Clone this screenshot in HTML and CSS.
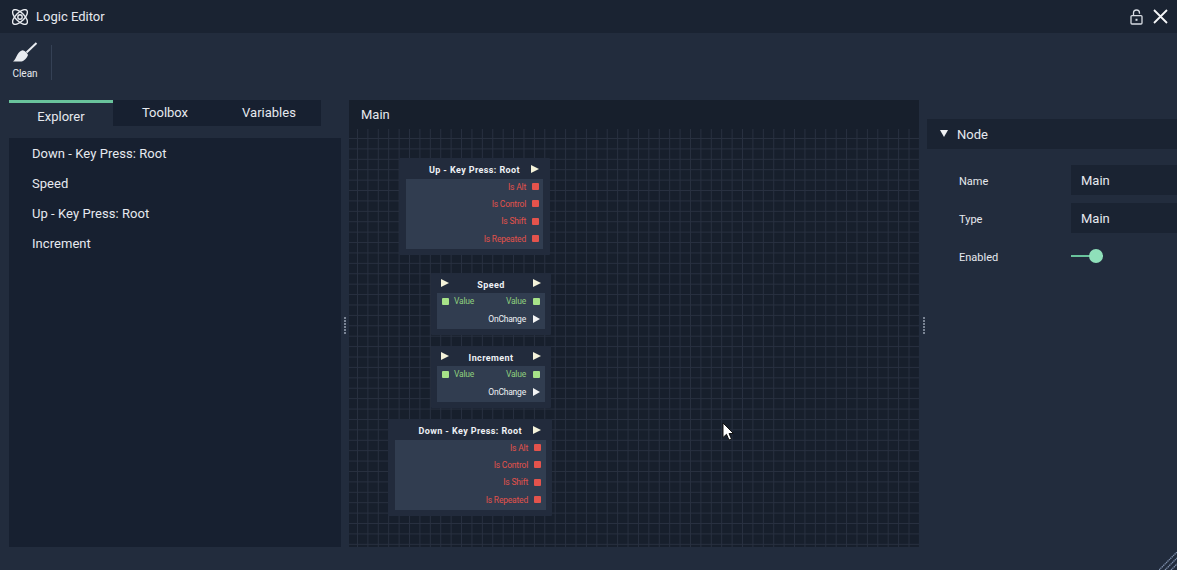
FILE: index.html
```html
<!DOCTYPE html>
<html lang="en">
<head>
<meta charset="utf-8">
<title>Logic Editor</title>
<link rel="stylesheet" href="styles.css">
</head>
<body>
<div class="app">
  <header class="titlebar">
    <svg class="atom" viewBox="0 0 16 16" width="16" height="16"><g fill="none" stroke="#e8ebf0" stroke-width="1.4"><ellipse cx="8" cy="8" rx="9.500" ry="4.300" transform="rotate(45 8 8)"/><ellipse cx="8" cy="8" rx="9.500" ry="4.300" transform="rotate(-45 8 8)"/><circle cx="8" cy="8" r="2.200"/></g></svg>
    <span class="title">Logic Editor</span>
    <span class="spacer"></span>
    <svg class="lock" viewBox="0 0 13 16" width="13" height="16"><g fill="none" stroke="#d8dce3" stroke-width="1.3"><path d="M3.500 6.500V4a3 3 0 0 1 6 0v.7"/><rect x="1" y="6.600" width="11" height="8.400" rx="1"/></g><rect x="5.500" y="9.800" width="2" height="2" fill="#d8dce3"/></svg>
    <svg class="close" viewBox="0 0 15 15" width="15" height="15"><path d="M1 1l13 13M14 1L1 14" stroke="#f4f5f7" stroke-width="1.800" fill="none"/></svg>
  </header>

  <div class="toolbar">
    <button class="tool">
      <svg viewBox="0 0 26 20" width="26" height="20"><path d="M14.500 10.500L24.500 1" stroke="#e8ebf0" stroke-width="2" fill="none"/><path d="M1 19.500C3 18 4 15 5.500 12.500 7 10 9 8.500 10.500 8.300 12.500 8.500 15.500 11 16 13 15 16 12 19 9.500 19.500z" fill="#e8ebf0"/></svg>
      <span>Clean</span>
    </button>
    <span class="sep"></span>
  </div>

  <main class="workspace">
    <section class="left">
      <nav class="tabs">
        <a class="tab active">Explorer</a>
        <a class="tab">Toolbox</a>
        <a class="tab">Variables</a>
      </nav>
      <ul class="list">
        <li>Down - Key Press: Root</li>
        <li>Speed</li>
        <li>Up - Key Press: Root</li>
        <li>Increment</li>
      </ul>
    </section>

    <section class="center">
      <div class="center-head">Main</div>
      <div class="canvas">
        <div class="node key n-up">
          <div class="node-head"><span class="node-title">Up - Key Press: Root</span><i class="play"></i></div>
          <div class="node-body">
            <div class="row red"><span>Is Alt</span><i class="port"></i></div>
            <div class="row red"><span>Is Control</span><i class="port"></i></div>
            <div class="row red"><span>Is Shift</span><i class="port"></i></div>
            <div class="row red"><span>Is Repeated</span><i class="port"></i></div>
          </div>
        </div>

        <div class="node var n-speed">
          <div class="node-head"><i class="play"></i><span class="node-title">Speed</span><i class="play"></i></div>
          <div class="node-body">
            <div class="row green"><i class="port"></i><span>Value</span><span class="grow">Value</span><i class="port"></i></div>
            <div class="row white"><span class="grow">OnChange</span><i class="play"></i></div>
          </div>
        </div>

        <div class="node var n-inc">
          <div class="node-head"><i class="play"></i><span class="node-title">Increment</span><i class="play"></i></div>
          <div class="node-body">
            <div class="row green"><i class="port"></i><span>Value</span><span class="grow">Value</span><i class="port"></i></div>
            <div class="row white"><span class="grow">OnChange</span><i class="play"></i></div>
          </div>
        </div>

        <div class="node key n-down">
          <div class="node-head"><span class="node-title">Down - Key Press: Root</span><i class="play"></i></div>
          <div class="node-body">
            <div class="row red"><span>Is Alt</span><i class="port"></i></div>
            <div class="row red"><span>Is Control</span><i class="port"></i></div>
            <div class="row red"><span>Is Shift</span><i class="port"></i></div>
            <div class="row red"><span>Is Repeated</span><i class="port"></i></div>
          </div>
        </div>

        <svg class="cursor" viewBox="0 0 12 19" width="12" height="19"><path d="M1 1v14.500l3.500-3.200 2.500 5.700 2.500-1-2.500-5.500H11.500z" fill="#fff" stroke="#111" stroke-width="1"/></svg>
      </div>
    </section>

    <section class="right">
      <div class="panel-head"><i class="tri"></i><span>Node</span></div>
      <div class="fields">
        <div class="field"><label>Name</label><div class="input">Main</div></div>
        <div class="field"><label>Type</label><div class="input">Main</div></div>
        <div class="field"><label>Enabled</label><div class="toggle"><i class="knob"></i></div></div>
      </div>
    </section>

    <i class="grip g1"></i>
    <i class="grip g2"></i>
  </main>

  <svg class="corner" viewBox="0 0 18 18" width="18" height="18"><g stroke="#7f90ad" stroke-width="1.300" stroke-dasharray="1.400 .6"><path d="M0 18L18 0M6 18L18 6M12 18L18 12"/></g></svg>
</div>
</body>
</html>
```
FILE: styles.css
```css
* { box-sizing: border-box; }
html, body { margin: 0; height: 100%; }
body {
  font-family: Roboto, "Liberation Sans", sans-serif;
  background: #222c3d;
  color: #e6e9ef;
  overflow: hidden;
}
.app { position: relative; width: 1177px; height: 570px; display: flex; flex-direction: column; }

.titlebar {
  height: 33px;
  flex: none;
  background: #1a2332;
  display: flex;
  align-items: center;
  padding: 0 9px 0 12px;
}
.title { margin-left: 8px; font-size: 13px; }
.spacer { flex: 1; }
.lock { margin-right: 10px; }

.toolbar { height: 67px; flex: none; display: flex; padding: 9px 0 0 12px; }
.tool {
  width: 26px; height: 42px; padding: 0; border: 0; background: none; color: #e6e9ef;
  font: 10px Roboto, sans-serif;
  display: flex; flex-direction: column; align-items: center; gap: 6px;
}
.tool svg { flex: none; }
.sep { width: 1px; height: 35px; margin: 3px 0 0 13px; background: #354155; }

.workspace { position: relative; flex: none; height: 447px; display: flex; padding-left: 9px; gap: 8px; }

.left { width: 332px; flex: none; display: flex; flex-direction: column; }
.tabs { width: 312px; height: 26px; display: flex; background: #172030; }
.tab { flex: 1; text-align: center; font-size: 13px; line-height: 26px; height: 26px; }
.tab.active { background: #222c3d; border-top: 3px solid #69c39c; line-height: 28px; }
.list { flex: 1; margin: 12px 0 0; padding: 1px 0 0 23px; list-style: none; background: #172030; font-size: 13px; letter-spacing: .05px; }
.list li { height: 30px; line-height: 30px; }

.center { width: 570px; flex: none; display: flex; flex-direction: column; background: #171f2c; }
.center-head { height: 29px; flex: none; padding-left: 12px; line-height: 29px; font-size: 13px; }
.canvas {
  position: relative; flex: 1;
  background-color: #171f2c;
  background-image:
    linear-gradient(to right, #283040 1px, transparent 1px),
    linear-gradient(to bottom, #283040 1px, transparent 1px);
  background-size: 10.42px 10.42px;
  background-position: 8px 9px;
}

.node { position: absolute; background: #222b3c; padding: 0 7px 6px; display: flex; flex-direction: column; border-radius: 1px; }
.key { height: 97px; }
.var { height: 62px; width: 120px; padding: 0 6px 6px; }
.n-up { left: 50px; top: 29px; width: 151px; }
.n-speed { left: 82px; top: 144px; }
.n-inc { left: 82px; top: 217px; }
.n-down { left: 39px; top: 290px; width: 164px; padding: 0 6px 6px 7px; }

.node-head { flex: 1; display: flex; align-items: center; justify-content: flex-end; padding: 0 4px; }
.n-down .node-head { padding: 0 5px; }
.node-title {
  font-size: 9px; font-weight: 700; letter-spacing: .4px; color: #eef1f5; padding-top: 3px;
  margin-right: 11px;
}
.var .node-head { justify-content: space-between; }
.var .node-title { margin: 0; flex: 1; text-align: center; }
.node-body { flex: none; background: #313d50; }
.key .node-body { height: 70px; }
.var .node-body { height: 36px; }
.row { height: 17.33px; display: flex; align-items: center; justify-content: flex-end; padding: 0 4px; font-size: 8.5px; letter-spacing: -.2px; gap: 6px; }
.row:first-child { margin-top: -1px; }
.n-down .row { padding: 0 5px; }
.row .grow { flex: 1; text-align: right; margin-right: 2px; }
.var .row { height: 18px; padding: 0 5px; gap: 5px; }
.red { color: #e2524b; }
.green { color: #8fd07e; }
.white { color: #eef1f5; }
.port { width: 7px; height: 7px; flex: none; border-radius: 1px; }
.red .port { background: #e4534c; }
.green .port { background: #a7e388; }
.play {
  flex: none; width: 0; height: 0;
  border-left: 8px solid #f5f3da;
  border-top: 4px solid transparent;
  border-bottom: 4px solid transparent;
}
.white .play { border-left-width: 7px; border-left-color: #f3f4f4; }

.cursor { position: absolute; left: 373px; top: 293px; }

.right { flex: 1; padding-top: 19px; }
.panel-head { height: 30px; background: #1a2332; display: flex; align-items: center; padding-left: 13px; gap: 9px; font-size: 13px; }
.tri {
  width: 0; height: 0;
  border-top: 7px solid #f0f2f5;
  border-left: 4px solid transparent;
  border-right: 4px solid transparent;
  margin-top: -1px;
}
.fields { display: flex; flex-direction: column; gap: 8px; margin-top: 16px; }
.field { height: 30px; display: flex; align-items: center; }
.field label { width: 144px; padding: 2px 0 0 32px; font-size: 11px; }
.input { flex: 1; height: 30px; line-height: 32px; background: #1a2332; padding-left: 10px; font-size: 13px; }
.toggle { position: relative; width: 32px; height: 2px; background: #69c39c; }
.knob { position: absolute; left: 18px; top: -6px; width: 14px; height: 14px; border-radius: 50%; background: #8fe0ba; }

.grip { position: absolute; width: 2px; height: 17px; top: 217px;
  background: repeating-linear-gradient(to bottom, #7a8494 0 2px, transparent 2px 3px); }
.g1 { left: 344px; }
.g2 { left: 923px; }

.corner { position: absolute; right: 0; bottom: 0; }
```
